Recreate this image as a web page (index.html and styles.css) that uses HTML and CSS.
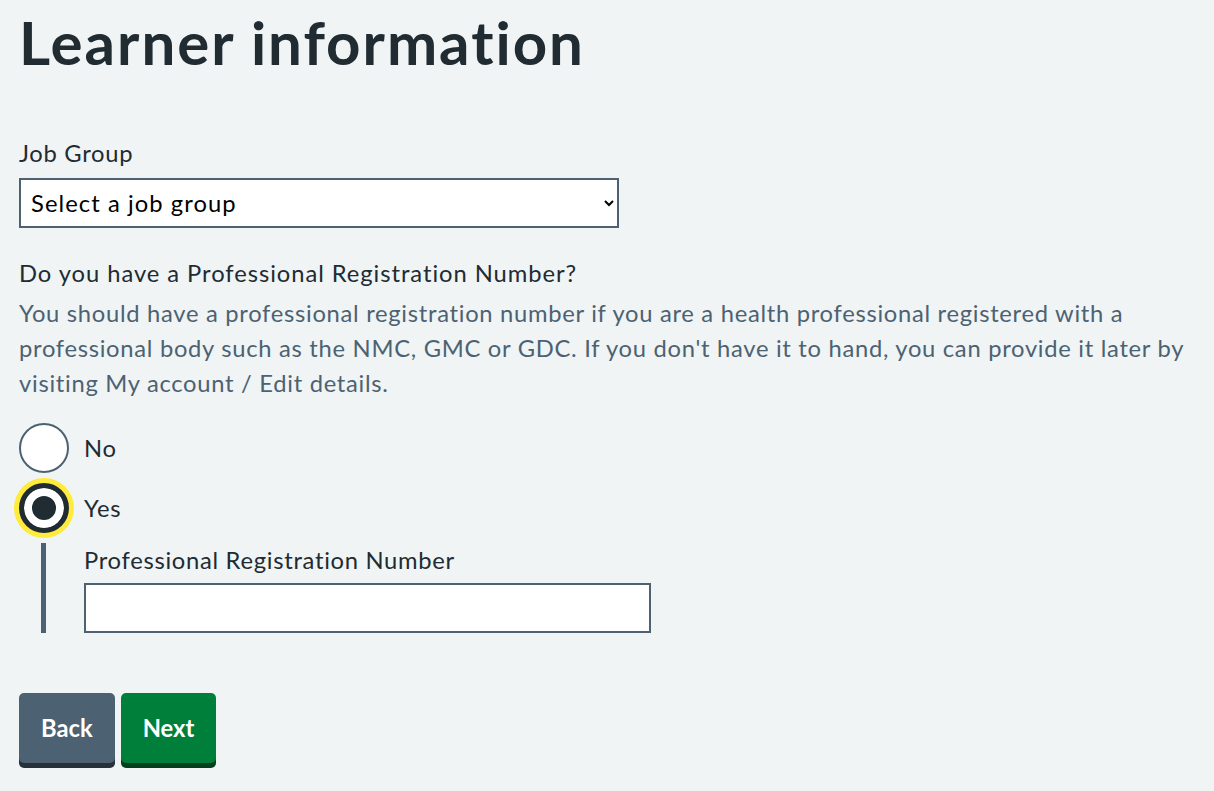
FILE: index.html
```html
<!DOCTYPE html>
<html lang="en">
<head>
<meta charset="utf-8">
<title>Learner information</title>
<link rel="stylesheet" href="styles.css">
</head>
<body>
<main class="page">
  <h1 class="title">Learner information</h1>

  <div class="form-group form-group--job">
    <label class="label" for="job-group">Job Group</label>
    <select id="job-group" class="select">
      <option>Select a job group</option>
    </select>
  </div>

  <div class="form-group">
    <fieldset class="fieldset">
      <legend class="label legend">Do you have a Professional Registration Number?</legend>
      <div class="hint">You should have a professional registration number if you are a health professional registered with a professional body such as the NMC, GMC or GDC. If you don't have it to hand, you can provide it later by visiting My account / Edit details.</div>
      <div class="radios">
        <div class="radio-item">
          <input class="radio-input" type="radio" name="prn" id="prn-no">
          <label class="radio-label" for="prn-no">No</label>
        </div>
        <div class="radio-item">
          <input class="radio-input radio-input--focus" type="radio" name="prn" id="prn-yes" checked>
          <label class="radio-label" for="prn-yes">Yes</label>
        </div>
        <div class="conditional">
          <label class="label" for="prn-number">Professional Registration Number</label>
          <input class="text-input" type="text" id="prn-number">
        </div>
      </div>
    </fieldset>
  </div>

  <div class="actions">
    <button class="button button--secondary" type="button">Back</button>
    <button class="button" type="button">Next</button>
  </div>
</main>
</body>
</html>
```

FILE: styles.css
```css
html, body {
  margin: 0;
  padding: 0;
  background: #f0f4f5;
}

body {
  font-family: Lato, "Noto Sans", "Liberation Sans", sans-serif;
  color: #212b32;
  font-size: 23.75px;
  line-height: 35px;
  letter-spacing: 0.03em;
  font-variant-ligatures: none;
}

.page {
  padding: 7px 19px 0 19px;
}

.title {
  font-size: 60px;
  line-height: 70px;
  font-weight: 700;
  letter-spacing: 0.033em;
  margin: 0 0 59px 0;
  color: #212b32;
}

.form-group {
  margin-bottom: 28px;
}

.label {
  display: block;
  margin: 0 0 7px 0;
  color: #212b32;
}

.legend {
  padding: 0;
  margin-bottom: 5px;
  letter-spacing: 0.04em;
}

.select {
  display: block;
  width: 600px;
  height: 50px;
  box-sizing: border-box;
  border: 2px solid #4c6272;
  border-radius: 0;
  background-color: #ffffff;
  color: #000000;
  font-family: inherit;
  font-size: 23.75px;
  letter-spacing: 0.045em;
  font-variant-ligatures: none;
  padding: 0 6px;
  margin: 0;
}

.fieldset {
  border: 0;
  margin: 0;
  padding: 0;
  min-width: 0;
}

.hint {
  color: #4c6272;
  margin-bottom: 22px;
}

.radio-item {
  display: flex;
  align-items: center;
  margin-bottom: 10px;
}

.radio-input {
  appearance: none;
  -webkit-appearance: none;
  width: 50px;
  height: 50px;
  box-sizing: border-box;
  margin: 0;
  border: 2px solid #4c6272;
  border-radius: 50%;
  background: #ffffff;
  flex: 0 0 auto;
}

.radio-input:checked {
  border: 5px solid #212b32;
  background: #212b32;
  box-shadow: inset 0 0 0 8px #ffffff;
}

.radio-input--focus,
.radio-input--focus:checked {
  box-shadow: 0 0 0 5px #ffeb3b, inset 0 0 0 8px #ffffff;
}

.radio-label {
  padding-left: 15px;
  color: #212b32;
}

.conditional {
  margin-left: 22px;
  border-left: 5px solid #4c6272;
  padding-left: 38px;
}

.conditional .label {
  margin-bottom: 5px;
}

.text-input {
  display: block;
  width: 567px;
  height: 50px;
  box-sizing: border-box;
  border: 2px solid #4c6272;
  border-radius: 0;
  background: #ffffff;
  font-family: inherit;
  font-size: 23.75px;
  padding: 0 8px;
  margin: 0;
}

.actions {
  display: flex;
  align-items: flex-start;
  gap: 6px;
  margin-top: 60px;
  padding-bottom: 10px;
}

.button {
  font-family: inherit;
  font-size: 23.75px;
  line-height: 35px;
  font-weight: 700;
  letter-spacing: 0;
  color: #ffffff;
  background: #007f3b;
  border: 0;
  border-radius: 5px;
  padding: 17.5px 22px;
  box-shadow: 0 5px 0 #00401e;
  margin: 0;
}

.button--secondary {
  background: #4c6272;
  box-shadow: 0 5px 0 #263139;
}
```
